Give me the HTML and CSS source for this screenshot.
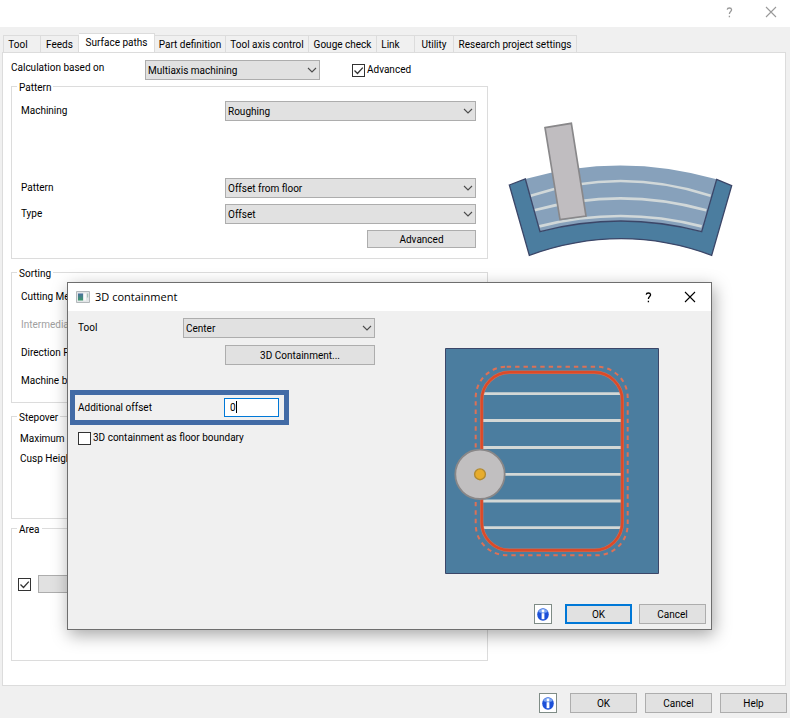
FILE: index.html
```html
<!DOCTYPE html>
<html lang="en">
<head>
<meta charset="utf-8">
<title>Surface paths</title>
<link rel="stylesheet" href="styles.css">
</head>
<body>
<svg class="defs" aria-hidden="true">
  <defs>
    <symbol id="chevron" viewBox="0 0 10 6"><path d="M1 1l4 4 4-4" fill="none" stroke="#4c4c4c" stroke-width="1.1"/></symbol>
    <symbol id="tick" viewBox="0 0 13 13"><path d="M2.5 6.5l3 3L10.8 3.6" fill="none" stroke="#333" stroke-width="1.3"/></symbol>
    <symbol id="cross" viewBox="0 0 12 12"><path d="M1 1l10 10M11 1L1 11" fill="none" stroke="currentColor" stroke-width="1.1"/></symbol>
    <symbol id="help" viewBox="0 0 7 11"><path d="M1.2 2.6Q1.4 1 3.4 1T5.6 2.8C5.6 4.6 3.4 4.6 3.4 7M3.4 8.8v1.4" fill="none" stroke="currentColor" stroke-width="1.3"/></symbol>
    <symbol id="info" viewBox="0 0 12 13">
      <ellipse cx="6" cy="6.5" rx="5.8" ry="6.2" fill="#1c50d8"/>
      <path d="M1.2 4A5.2 5.2 0 0 1 10.8 4Q6 6 1.2 4z" fill="#7ba6f2"/>
      <circle cx="6" cy="3" r="1.4" fill="#fff"/>
      <path d="M4.6 5.200h2.800v6H4.600z" fill="#fff"/>
    </symbol>
  </defs>
</svg>
<div class="window">
  <header class="titlebar">
    <button class="caption-btn" aria-label="Help"><svg class="help-icon"><use href="#help"/></svg></button>
    <button class="caption-btn" aria-label="Close"><svg class="cross-icon"><use href="#cross"/></svg></button>
  </header>
  <nav class="tabs" role="tablist">
    <button class="tab tab-tool" role="tab">Tool</button>
    <button class="tab tab-feeds" role="tab">Feeds</button>
    <button class="tab tab-surface active" role="tab" aria-selected="true">Surface paths</button>
    <button class="tab tab-part" role="tab">Part definition</button>
    <button class="tab tab-axis" role="tab">Tool axis control</button>
    <button class="tab tab-gouge" role="tab">Gouge check</button>
    <button class="tab tab-link" role="tab">Link</button>
    <button class="tab tab-utility" role="tab">Utility</button>
    <button class="tab tab-research" role="tab">Research project settings</button>
  </nav>
  <main class="panel">
    <div class="calc-row">
      <label class="calc-label" for="calc">Calculation based on</label>
      <span class="select calc-select"><select id="calc"><option>Multiaxis machining</option></select><svg><use href="#chevron"/></svg></span>
      <label class="check"><span class="box"><input type="checkbox" checked><svg><use href="#tick"/></svg></span>Advanced</label>
    </div>
    <div class="columns">
      <div class="groups">
        <fieldset>
          <legend>Pattern</legend>
          <div class="pattern">
            <div class="field machining"><label for="machining">Machining</label><span class="select"><select id="machining"><option>Roughing</option></select><svg><use href="#chevron"/></svg></span></div>
            <div class="field"><label for="pattern">Pattern</label><span class="select"><select id="pattern"><option>Offset from floor</option></select><svg><use href="#chevron"/></svg></span></div>
            <div class="field"><label for="type">Type</label><span class="select"><select id="type"><option>Offset</option></select><svg><use href="#chevron"/></svg></span></div>
            <button class="btn advanced">Advanced</button>
          </div>
        </fieldset>
        <fieldset>
          <legend>Sorting</legend>
          <div class="sorting">
            <div>Cutting Me</div>
            <div class="disabled">Intermedia</div>
            <div>Direction F</div>
            <div>Machine by</div>
          </div>
        </fieldset>
        <fieldset>
          <legend>Stepover</legend>
          <div class="stepover">
            <div>Maximum s</div>
            <div>Cusp Heigh</div>
          </div>
        </fieldset>
        <fieldset class="area-group">
          <legend>Area</legend>
          <div class="area">
            <span class="box"><input type="checkbox" checked aria-label="Area"><svg><use href="#tick"/></svg></span>
            <button class="btn area-btn" aria-label="Area"></button>
          </div>
        </fieldset>
      </div>
      <div class="preview">
        <svg class="floor-drawing" viewBox="24 36 675 405" role="img" aria-label="Offset from floor">
          <path d="M76 207Q362 125 650 208L605 365Q362 301 120 365z" fill="#87a1bb"/>
          <g fill="none" stroke="#d1d8d9" stroke-width="8">
            <path d="M92 257Q362 169 632 257"/>
            <path d="M103 301Q362 229 619 301"/>
            <path d="M118 349Q362 287 605 349"/>
          </g>
          <path d="M28 225L76 207 120 365Q362 301 605 365L650 208 695 227 635 436Q365 336 88 436z" fill="#4b7d9f" stroke="#3b4668" stroke-width="4"/>
          <path d="M135 53L214 40 258 318 180 329z" fill="#c0bdc0" stroke="#89888a" stroke-width="5"/>
        </svg>
      </div>
    </div>
  </main>
  <footer class="footer">
    <button class="info" aria-label="Information"><svg><use href="#info"/></svg></button>
    <button class="btn action">OK</button>
    <button class="btn action">Cancel</button>
    <button class="btn action">Help</button>
  </footer>

  <section class="dialog" role="dialog" aria-labelledby="dlg-title">
    <header class="dialog-title">
      <svg class="app-icon" viewBox="0 0 14 12">
        <defs><linearGradient id="app" x2="0" y2="1"><stop offset="0" stop-color="#4a6f9f"/><stop offset="1" stop-color="#3f9a6b"/></linearGradient></defs>
        <path d="M.5.5h13v11H.5z" fill="#e3e6e8" stroke="#b3b8bb"/>
        <path d="M2 2.500h5v7H2z" fill="url(#app)"/>
        <path d="M8 2.500h2v7H8z" fill="#fafafa"/>
        <path d="M11 2.500h1.200v4H11z" fill="#a8c3b8"/>
      </svg>
      <h1 id="dlg-title">3D containment</h1>
      <button class="caption-btn" aria-label="Help"><svg class="help-icon"><use href="#help"/></svg></button>
      <button class="caption-btn" aria-label="Close"><svg class="cross-icon"><use href="#cross"/></svg></button>
    </header>
    <div class="dialog-body">
      <div class="options">
        <div class="tool-row"><label for="tool">Tool</label><span class="select"><select id="tool"><option>Center</option></select><svg><use href="#chevron"/></svg></span></div>
        <button class="btn containment">3D Containment...</button>
        <div class="highlight"><label for="offset">Additional offset</label><span class="entry"><input id="offset" type="text" value="0"><i class="caret"></i></span></div>
        <label class="check boundary"><span class="box"><input type="checkbox"></span>3D containment as floor boundary</label>
      </div>
      <svg class="containment-drawing" viewBox="0 0 214 226" role="img" aria-label="Tool center on containment">
        <path d="M.5.5h213v225H.5z" fill="#4b7d9f" stroke="#3b4668"/>
        <path d="M37 45.700h139M37 72.500h139M37 99.500h139M37 126.300h139M37 153h139M37 179.700h139" stroke="#d3d8d6" stroke-width="2.800"/>
        <rect x="36.700" y="24.300" width="140.600" height="178" rx="28" fill="none" stroke="#c9735f" stroke-width="3.400"/>
        <rect x="36.700" y="24.300" width="140.600" height="178" rx="28" fill="none" stroke="#dc4a28" stroke-width="2.400"/>
        <rect x="30.700" y="18.700" width="152" height="188.600" rx="31" fill="none" stroke="#dd7156" stroke-width="2" stroke-dasharray="4.400 4"/>
        <circle cx="35" cy="126.300" r="24.700" fill="#c1bfc0" stroke="#898788" stroke-width="1.800"/>
        <circle cx="35" cy="126.300" r="5.400" fill="#e7ac2c" stroke="#b28a30" stroke-width="1.400"/>
      </svg>
    </div>
    <div class="dialog-actions">
      <button class="info" aria-label="Information"><svg><use href="#info"/></svg></button>
      <button class="btn action default">OK</button>
      <button class="btn action">Cancel</button>
    </div>
  </section>
</div>
</body>
</html>
```
FILE: styles.css
```css
* { box-sizing: border-box; }

body {
  margin: 0;
  background: #f0f0f0;
  color: #000;
  font: 10px/14px Roboto, "Liberation Sans", sans-serif;
}

button, select, input { font: inherit; color: inherit; margin: 0; }
button { padding: 0; }
.defs { position: absolute; width: 0; height: 0; }

.window {
  position: relative;
  display: flex;
  flex-direction: column;
  min-height: 100vh;
}

/* Title bars */
.titlebar {
  display: flex;
  justify-content: flex-end;
  align-items: center;
  height: 27px;
  padding: 0 8px 3px 0;
  gap: 20px;
  background: #fff;
  color: #999;
}
.caption-btn {
  display: grid;
  place-items: center;
  width: 22px;
  height: 22px;
  border: 0;
  background: none;
}
.help-icon { width: 7px; height: 11px; }
.cross-icon { width: 12px; height: 12px; }

/* Tabs */
.tabs {
  display: flex;
  align-items: flex-end;
  height: 25px;
  padding-left: 3px;
}
.tab {
  height: 17px;
  padding: 1px 0 0;
  border: 1px solid #dcdcdc;
  border-width: 1px 1px 0 0;
  background: #f0f0f0;
  white-space: nowrap;
}
.tab:first-child { border-left-width: 1px; }
.tab.active {
  height: 20px;
  margin-bottom: -1px;
  padding-bottom: 2px;
  background: #fff;
}
.tab-tool { width: 38px; padding-right: 8px; }
.tab-feeds { width: 38px; }
.tab-surface { width: 76px; }
.tab-part { width: 71px; }
.tab-axis { width: 83px; }
.tab-gouge { width: 68px; }
.tab-link { width: 38px; padding-right: 10px; }
.tab-utility { width: 39px; }
.tab-research { width: 123px; }

/* Main panel */
.panel {
  flex: 1;
  margin: 0 4px 0 2px;
  padding: 7px 0 24px 8px;
  border: 1px solid #dcdcdc;
  background: #fff;
}
.calc-row { display: flex; align-items: center; height: 20px; }
.calc-label { width: 134px; padding-bottom: 4px; }
.calc-select { width: 175px; margin-right: 32px; }
.columns { display: grid; grid-template-columns: 477fr 297fr; }

/* Form controls */
.select { position: relative; display: block; height: 20px; }
.select select {
  display: block;
  width: 100%;
  height: 20px;
  padding: 1px 20px 0 2px;
  appearance: none;
  border: 1px solid #adadad;
  border-radius: 0;
  background: #e1e1e1;
}
.select svg {
  position: absolute;
  top: 7px;
  right: 3px;
  width: 10px;
  height: 6px;
  pointer-events: none;
}
.btn {
  height: 20px;
  padding-top: 1px;
  border: 1px solid #adadad;
  background: #e1e1e1;
}
.check { display: flex; align-items: center; gap: 2px; }
.box { position: relative; width: 13px; height: 13px; }
.box input {
  display: block;
  width: 13px;
  height: 13px;
  appearance: none;
  border: 1px solid #333;
  background: #fff;
}
.box svg { position: absolute; inset: 0; width: 13px; height: 13px; pointer-events: none; }

/* Groups */
fieldset {
  min-width: 0;
  margin: 7px 0 0;
  padding: 0;
  border: 1px solid #dcdcdc;
}
fieldset:first-child { margin-top: 0; }
.area-group { margin-top: 3px; }
legend { height: 13px; margin-left: 5px; padding: 0 2px; line-height: 15px; }
.pattern {
  display: flex;
  flex-direction: column;
  gap: 6px;
  padding: 8px 11px 10px 9px;
}
.field { display: grid; grid-template-columns: 204px 1fr; align-items: center; }
.machining { margin-bottom: 51px; }
.advanced { align-self: flex-end; width: 109px; height: 18px; }
.sorting { padding: 4px 9px 7px; line-height: 28px; }
.stepover { padding: 6px 8px 49px; line-height: 20px; }
.disabled { color: #a0a0a0; }
.area { display: flex; align-items: center; gap: 7px; padding: 40px 6px 67px; }
.area-btn { width: 109px; height: 18px; }
.preview { padding: 42px 0 0 20px; }
.floor-drawing { display: block; width: 225px; max-width: 100%; }

/* Action rows */
.footer {
  display: flex;
  justify-content: flex-end;
  align-items: center;
  gap: 8px;
  height: 32px;
  padding: 2px 3px 0 0;
}
.action { width: 67px; }
.info {
  display: grid;
  place-items: center;
  width: 18px;
  height: 20px;
  margin-right: 5px;
  border: 1px solid #7f8c86;
  background: #fff;
}
.info svg { width: 12px; height: 13px; }
.default { border: 2px solid #0078d7; }

/* Containment dialog */
.dialog {
  position: absolute;
  top: 282px;
  left: 67px;
  right: 78px;
  border: 1px solid #6e6e6e;
  background: #f0f0f0;
  box-shadow: 2px 5px 16px rgba(0, 0, 0, 0.35);
}
.dialog-title {
  display: flex;
  align-items: center;
  gap: 20px;
  height: 28px;
  padding: 0 10px 0 8px;
  background: #fff;
}
.app-icon { width: 14px; height: 12px; }
.dialog-title h1 {
  flex: 1;
  margin: 0 0 0 -15px;
  font: 11px/16px "Open Sans", "Noto Sans", sans-serif;
}
.dialog-body {
  display: grid;
  grid-template-columns: 305px 1fr;
  column-gap: 70px;
  padding: 7px 2px 30px;
}
.options { display: flex; flex-direction: column; align-items: flex-start; }
.tool-row {
  display: grid;
  grid-template-columns: 105px 1fr;
  align-items: center;
  align-self: stretch;
  padding-left: 8px;
}
.containment { align-self: flex-end; width: 150px; margin-top: 7px; }
.highlight {
  display: flex;
  align-items: center;
  height: 35px;
  margin-top: 25px;
  padding: 0 5px 0 3px;
  border: 5px solid #426ba6;
}
.highlight label { width: 146px; }
.entry { position: relative; }
.entry input {
  display: block;
  width: 55px;
  height: 19px;
  padding: 0 5px;
  border: 1px solid #0078d7;
  background: #fff;
}
.caret { position: absolute; top: 3px; left: 12px; width: 1px; height: 12px; background: #000; }
.boundary { margin: 6px 0 0 8px; }
.containment-drawing { display: block; width: 214px; height: 226px; margin-top: 30px; }
.dialog-actions {
  display: flex;
  justify-content: flex-end;
  gap: 7px;
  padding: 0 5px 5px 0;
}
.dialog-actions .info { margin-right: 6px; }
```
